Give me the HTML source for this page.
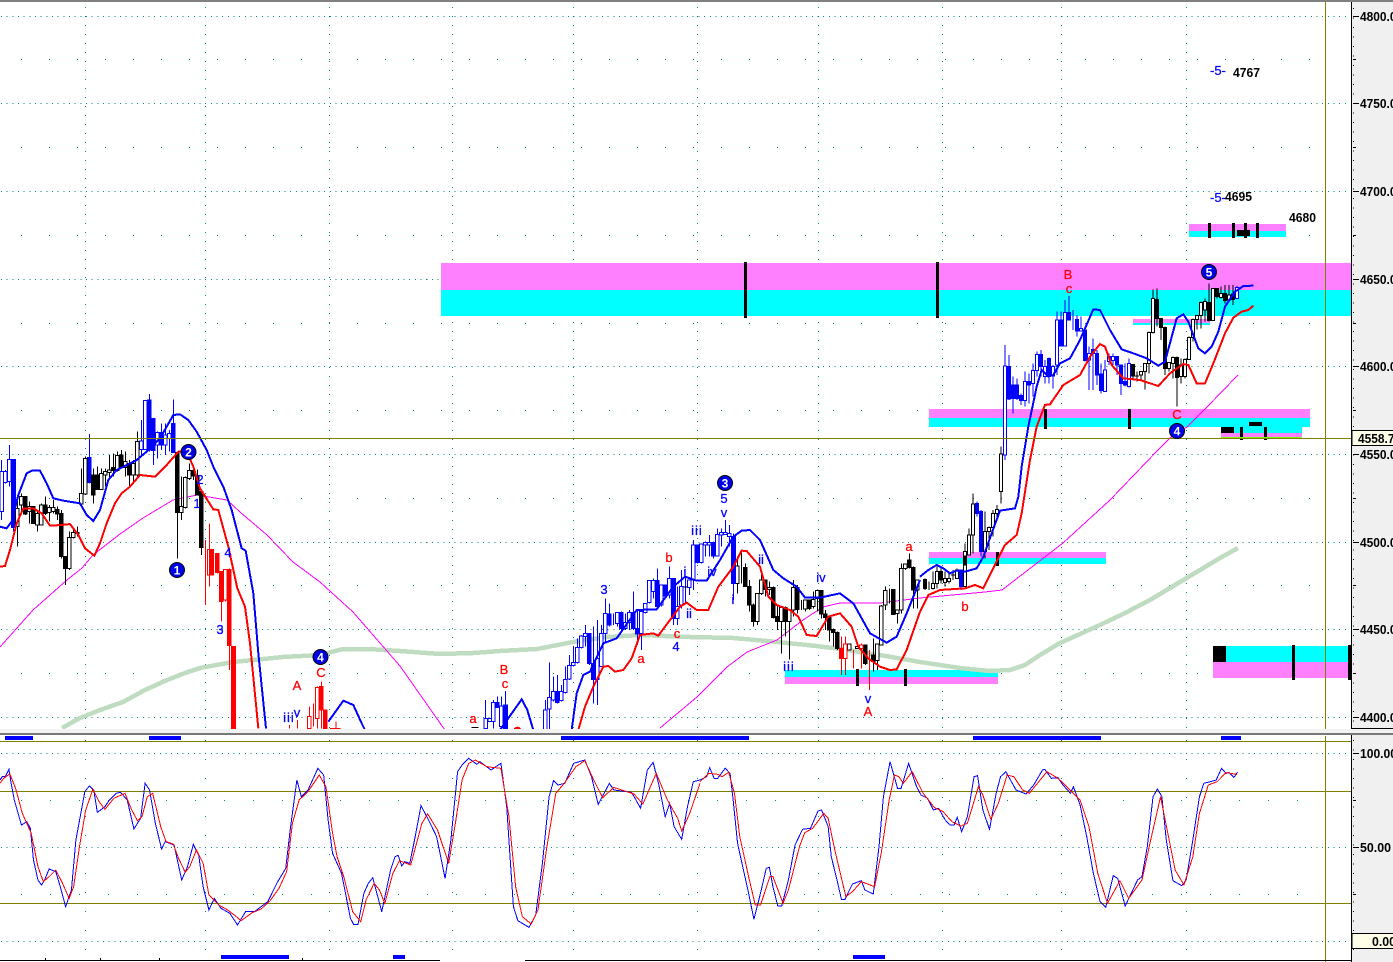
<!DOCTYPE html>
<html><head><meta charset="utf-8"><title>Chart</title>
<style>
html,body{margin:0;padding:0;background:#fff;width:1393px;height:962px;overflow:hidden}
svg{display:block;shape-rendering:crispEdges}
text{font-family:"Liberation Sans",sans-serif;shape-rendering:auto}
.l{font-size:13px;text-anchor:middle}
.b{fill:#0000ff;stroke:#0000ff;stroke-width:.25}.r{fill:#ff0000;stroke:#ff0000;stroke-width:.25}
.i3{letter-spacing:1px}
.k{font-size:13px;font-weight:bold;fill:#000}
.ax{font-size:13px;font-weight:bold;fill:#000}
.c{font-size:12px;font-weight:bold;fill:#fff;text-anchor:middle}
.cc{fill:#0000e6;stroke:#000;stroke-width:1;shape-rendering:auto}
</style></head><body>
<svg width="1393" height="962" viewBox="0 0 1393 962" xmlns="http://www.w3.org/2000/svg">
<rect width="1393" height="962" fill="#fff"/>
<!-- grid -->
<g fill="none" stroke="#008080" stroke-width="1">
<path stroke-dasharray="1 4.67" d="M1 16.5H1346M1 103.5H1346M1 191.5H1346M1 279.5H1346M1 366.5H1346M1 454.5H1346M1 542.5H1346M1 629.5H1346M1 717.5H1346"/>
<path stroke-dasharray="1 27" d="M21 59.5H1320M21 147.5H1320M21 235.5H1320M21 323.5H1320M21 410.5H1320M21 498.5H1320M21 585.5H1320M21 673.5H1320"/>
<path stroke-dasharray="1 8" d="M85.5 7V728M205.5 7V728M329.5 7V728M452.5 7V728M573.5 7V728M697.5 7V728M818.5 7V728M942.5 7V728M1061.5 7V728M1186.5 7V728"/>
</g>
<!-- bands -->
<rect x="441" y="263" width="910" height="27" fill="#ff80ff"/><rect x="441" y="290" width="910" height="26" fill="#00ffff"/>
<rect x="1189" y="224" width="97" height="7" fill="#ff80ff"/><rect x="1189" y="231" width="97" height="6" fill="#00ffff"/>
<rect x="1133" y="319" width="77" height="4" fill="#ff80ff"/><rect x="1133" y="323" width="77" height="2" fill="#00ffff"/>
<rect x="929" y="409" width="381" height="9" fill="#ff80ff"/><rect x="929" y="418" width="381" height="9" fill="#00ffff"/>
<rect x="1221" y="427" width="81" height="6" fill="#00ffff"/><rect x="1221" y="433" width="81" height="5" fill="#ff80ff"/>
<rect x="929" y="552" width="177" height="6" fill="#ff80ff"/><rect x="929" y="558" width="177" height="6" fill="#00ffff"/>
<rect x="1213" y="646" width="138" height="16" fill="#00ffff"/><rect x="1213" y="662" width="138" height="16" fill="#ff80ff"/>
<rect x="785" y="670" width="213" height="7" fill="#00ffff"/><rect x="785" y="677" width="213" height="7" fill="#ff80ff"/>
<!-- band marks -->
<g fill="#000">
<rect x="744" y="262" width="3" height="56"/><rect x="936" y="262" width="3" height="56"/>
<rect x="1208" y="223" width="3" height="15"/><rect x="1232" y="223" width="3" height="15"/><rect x="1244" y="223" width="3" height="15"/><rect x="1256" y="223" width="3" height="15"/><rect x="1237" y="230" width="13" height="6"/>
<rect x="1044" y="409" width="3" height="20"/><rect x="1128" y="409" width="3" height="20"/>
<rect x="1221" y="427" width="13" height="6"/><rect x="1249" y="422" width="13" height="4"/><rect x="1240" y="427" width="3" height="13"/><rect x="1264" y="427" width="3" height="13"/>
<rect x="964" y="552" width="3" height="14"/><rect x="996" y="552" width="3" height="14"/>
<rect x="1213" y="646" width="13" height="16"/><rect x="1292" y="645" width="3" height="35"/><rect x="1348" y="645" width="3" height="35"/>
<rect x="856" y="669" width="3" height="17"/><rect x="904" y="669" width="3" height="17"/>
</g>
<rect x="1221" y="437" width="81" height="2" fill="#80ff00"/>
<!-- green MA -->
<polyline fill="none" stroke="#bfdcc0" stroke-width="4.5" stroke-linejoin="round" points="62,728 80,718 100,710 123,702 145,690 167,680 185,673 200,668 233,662 283,657 320,655 343,649 367,649 400,651 440,654 473,653 500,651 537,649 573,642 607,637 640,635 690,637 733,638 767,641 807,645 833,648 880,655 920,662 960,668 990,671 1010,670 1025,665 1040,655 1060,643 1100,625 1125,613 1150,600 1175,585 1200,570 1220,558 1238,548"/>
<!-- thin magenta -->
<g fill="none" stroke="#ff00ff" stroke-width="1">
<polyline points="0,647 33,610 67,580 82,568 93,555 120,534 143,518 173,500 197,495 227,500 240,512 267,535 293,562 320,582 353,612 400,666 447,733"/>
<polyline points="660,728 697,697 727,667 747,652 777,640 803,620 823,607 840,603 880,603 920,598 985,592 1002,590 1063,543 1110,500 1158,450 1170,438 1187,427 1207,407 1238,375"/>
</g>
<!-- candles 1 -->
<g transform="translate(0,380) scale(.33333)" stroke-width="3">
<g stroke="#00f" fill="none"><path d="M5 240V420M16 270V310M28 195V320M40 238V455M268 162V310M424 120V230M436 60V210M448 42V215M460 115V255M472 155V235M484 130V210M496 130V225M508 150V215M520 58V218"/></g>
<path stroke="#00f" fill="#fff" d="M0 275h10V395H0zM11 275h10V308h-10zM23 238h10V305h-10zM419 183h10V208h-10zM431 62h10V208h-10zM467 158h10V195h-10zM491 165h10V195h-10zM503 160h10V175h-10z"/>
<path stroke="#00f" fill="#00f" d="M34 238h12V442H34zM263 232h10V308h-10zM443 60h10V210h-10zM455 115h10V212h-10zM479 157h10V195h-10zM515 130h10V218h-10z"/>
<path stroke="#000" fill="none" d="M52 345V500M64 340V400M76 350V405M88 365V430M100 380V430M112 395V455M124 370V435M136 350V405M148 375V425M160 360V400M172 380V420M184 390V535M196 530V615M208 455V570M220 445V475M232 440V470M244 265V375M256 230V345M280 265V370M292 260V330M304 265V330M316 265V320M328 225V295M340 220V290M352 215V275M364 210V265M376 215V290M388 240V320M400 240V305M412 155V295M532 215V535M544 290V420M556 290V385M568 250V300M580 265V300M592 268V345M604 335V525"/>
<path stroke="#000" fill="#fff" d="M47 385h10V440H47zM59 350h10V375H59zM83 380h10V395H83zM107 400h10V435h-10zM119 375h10V435h-10zM143 383h10V398h-10zM155 383h10V395h-10zM203 472h10V565h-10zM215 458h10V472h-10zM227 458h10V460h-10zM239 340h10V372h-10zM251 235h10V342h-10zM299 280h10V328h-10zM311 275h10V285h-10zM323 270h10V278h-10zM347 226h10V272h-10zM371 245h10V262h-10zM395 250h10V285h-10zM407 185h10V285h-10zM539 380h10V398h-10zM551 292h10V382h-10zM563 272h10V295h-10z"/>
<path stroke="#000" fill="#000" d="M71 350h10V402H71zM95 380h10V430H95zM131 375h10V400h-10zM167 388h10V402h-10zM179 400h10V530h-10zM191 530h10V565h-10zM275 285h10V345h-10zM287 285h10V328h-10zM335 262h10V272h-10zM359 225h10V262h-10zM383 250h10V285h-10zM527 218h10V398h-10zM575 272h10V288h-10zM587 287h10V345h-10zM599 335h10V503h-10z"/>
<path stroke="#f00" fill="none" d="M616 480V675M628 430V620M652 520V580M664 575V725M676 568V665M688 565V870M868 1035V1045M892 1020V1045M928 980V1045M940 970V1040M952 920V1045M964 905V1045M976 990V1045M990 1045H1022M1008 1025V1045"/>
<path stroke="#f00" fill="#fff" d="M623 508h10V585h-10zM671 568h10V660h-10zM923 1010h10V1045h-10zM947 922h10V1015h-10z"/>
<path stroke="#f00" fill="#f00" d="M628 508h12V585h-12zM647 520h10V578h-10zM659 575h10V665h-10zM683 568h10V797h-10zM694 800h12V1045h-12zM959 920h10V990h-10zM971 990h10V1045h-10z"/>
<polyline fill="none" stroke="#f00" stroke-width="6" points="0,560 15,558 30,510 50,430 70,385 100,385 125,400 150,437 185,435 210,432 235,465 255,505 283,527 300,490 320,430 345,370 365,340 390,320 420,285 465,290 500,255 535,215 560,215 580,260 600,325 640,388 655,390 685,500 712,625 735,680 750,790 775,1045"/>
<polyline fill="none" stroke="#00f" stroke-width="6" points="0,440 20,445 35,425 55,345 80,280 95,272 120,272 140,310 160,355 190,362 240,370 260,405 280,423 300,390 325,300 350,270 380,255 410,240 440,215 480,175 520,105 540,103 565,120 590,155 620,210 640,260 670,320 695,390 725,505 737,512 760,640 775,820 798,1045"/>
<polyline fill="none" stroke="#00f" stroke-width="6" points="985,1025 1030,962 1060,975 1085,1030 1095,1050"/>
</g>
<!-- candles 2 -->
<g transform="translate(440,470) scale(.33333)" stroke-width="3">
<path stroke="#000" fill="none" d="M95 772H115M892 260V370M904 245V340M916 280V350M928 330V425M940 400V470M952 370V465M964 310V375M976 330V380M988 335V375M1000 350V445M1012 410V480M1024 415V550M1036 410V500M1048 420V568M1060 330V440M1072 345V430M1084 390V420M1096 390V425M1108 390V420M1120 365V415M1132 358V425M1144 362V445M1156 420V480M1168 440V515M1180 475V530M1192 485V540M1276 525V585M1300 505V605M1312 520V600M1324 405V525M1336 350V420M1348 355V400M1360 358V435M1372 420V460M1384 280V430M1396 280V300M1408 250V295M1420 290V415M1432 330V415"/>
<path stroke="#000" fill="#fff" d="M887 288h10V340H887zM947 370h10V455H947zM959 330h10V370H959zM983 352h10V358H983zM1019 412h10V455h-10zM1043 420h10V455h-10zM1055 352h10V420h-10zM1091 390h10V417h-10zM1115 388h10V410h-10zM1127 362h10V385h-10zM1223 522h10V540h-10zM1247 530h10V535h-10zM1307 522h10V572h-10zM1319 408h10V525h-10zM1331 362h10V405h-10zM1367 420h10V430h-10zM1379 295h10V420h-10zM1391 282h10V295h-10zM1427 330h10V360h-10z"/>
<path stroke="#000" fill="#000" d="M911 292h10V350H911zM923 350h10V405H923zM935 405h10V455H935zM971 330h10V358H971zM995 352h10V442H995zM1007 440h10V455h-10zM1031 412h10V455h-10zM1067 352h10V418h-10zM1103 390h10V415h-10zM1139 362h10V432h-10zM1151 432h10V442h-10zM1163 442h10V480h-10zM1175 478h10V488h-10zM1187 488h10V535h-10zM1271 525h10V580h-10zM1295 555h10V575h-10zM1355 358h10V433h-10zM1403 270h10V292h-10zM1415 292h10V360h-10z"/>
<path stroke="#f00" fill="none" d="M1204 500V615M1216 500V615M1240 540V595M1264 520V595M1288 540V660"/>
<path stroke="#f00" fill="#fff" d="M1211 522h10V565h-10zM1259 525h10V535h-10z"/>
<path stroke="#f00" fill="#f00" d="M1199 535h10V565h-10z"/>
<path stroke="#00f" fill="none" d="M137 690V775M160 690V775M172 680V712M184 680V770M196 663V780M316 690V780M328 578V780M340 620V695M352 615V700M364 645V695M376 590V670M388 555V630M400 530V590M412 505V580M424 495V535M436 465V530M448 490V585M460 470V700M472 450V705M484 465V590M496 385V515M508 400V470M520 430V465M532 430V470M544 425V480M556 430V480M568 420V480M580 365V480M592 420V525M604 420V540M616 400V430M628 330V400M640 325V385M652 295V415M664 345V410M676 345V385M688 290V385M700 325V465M712 350V465M724 300V415M736 320V400M748 330V375M760 210V360M772 225V280M784 225V280M796 215V260M808 195V260M820 215V265M832 175V260M844 175V230M856 150V195M868 165V230M880 190V390"/>
<path stroke="#00f" fill="#fff" d="M132 745h10V775h-10zM144 745h10V755h-10zM155 698h10V755h-10zM179 708h10V770h-10zM311 720h10V780h-10zM323 682h10V717h-10zM335 665h10V690h-10zM359 665h10V692h-10zM371 628h10V668h-10zM383 587h10V627h-10zM395 578h10V587h-10zM407 532h10V578h-10zM419 498h10V532h-10zM431 490h10V500h-10zM467 565h10V628h-10zM479 490h10V590h-10zM491 430h10V490h-10zM527 428h10V460h-10zM551 458h10V475h-10zM563 428h10V458h-10zM599 425h10V490h-10zM611 400h10V428h-10zM623 332h10V398h-10zM635 332h10V365h-10zM659 345h10V405h-10zM683 325h10V375h-10zM707 410h10V445h-10zM719 350h10V405h-10zM743 330h10V352h-10zM755 225h10V330h-10zM779 222h10V278h-10zM791 218h10V225h-10zM803 218h10V225h-10zM827 193h10V258h-10zM839 188h10V195h-10zM851 188h10V193h-10zM863 190h10V200h-10z"/>
<path stroke="#00f" fill="#00f" d="M167 698h10V712h-10zM190 705h12V780h-12zM347 665h10V697h-10zM443 490h10V580h-10zM455 580h10V628h-10zM503 432h10V465h-10zM539 427h10V475h-10zM575 428h10V475h-10zM587 475h10V492h-10zM647 332h10V410h-10zM671 345h10V378h-10zM694 325h12V445h-12zM767 225h10V278h-10zM815 218h10V258h-10zM874 200h12V340h-12z"/>
<rect x="730" y="349" width="12" height="3" fill="#000"/>
<polyline fill="none" stroke="#f00" stroke-width="6" points="415,780 435,710 460,650 490,590 505,588 525,605 550,600 575,565 600,495 640,490 655,497 690,450 720,410 740,398 770,420 805,420 835,350 880,290 905,242 920,243 960,290 985,380 1010,405 1050,420 1075,440 1100,495 1130,498 1165,440 1200,430 1235,470 1255,530 1285,565 1320,590 1350,600 1370,598 1400,540 1440,425"/>
<polyline fill="none" stroke="#00f" stroke-width="6" points="180,780 245,688 262,720 280,780"/>
<polyline fill="none" stroke="#00f" stroke-width="6" points="395,780 410,670 430,615 450,605 490,520 530,505 590,420 650,418 700,350 735,320 770,332 800,332 840,270 880,200 905,182 930,180 960,210 1000,300 1030,325 1070,350 1095,383 1140,383 1200,370 1240,400 1290,490 1340,518 1370,500 1400,430 1440,330"/>
<circle cx="232" cy="782" r="12" fill="#f00"/>
</g>
<!-- candles 3 -->
<g transform="translate(920,250) scale(.33333)" stroke-width="3">
<path stroke="#000" fill="none" d="M15 985V1020M27 995V1020M39 965V1018M51 950V1015M63 950V1000M75 965V1010M87 965V1000M99 960V990M93 975H105M111 955V985M135 880V1010M147 835V915M159 730V910M195 785V925M207 830V900M219 780V860M231 765V800M243 590V760M639 345V390M651 365V395M645 378H657M663 365V395M675 340V418M687 245V370M699 118V250M711 115V230M723 205V270M735 230V375M747 340V365M759 320V385M771 320V470M783 325V400M795 325V385M807 260V330M819 205V275M831 195V238M843 155V235M855 145V215M867 100V215M879 115V212M891 115V145M903 110V145M915 105V160M927 105V155M939 105V165M951 108V145"/>
<path stroke="#000" fill="#fff" d="M34 1000h10V1015H34zM46 965h10V1000H46zM70 985h10V998H70zM82 985h10V995H82zM106 960h10V985h-10zM130 905h10V1010h-10zM142 855h10V915h-10zM154 762h10V855h-10zM190 845h10V905h-10zM202 833h10V845h-10zM214 790h10V833h-10zM226 778h10V790h-10zM238 612h10V725h-10zM658 365h10V375h-10zM670 340h10V365h-10zM682 248h10V340h-10zM694 145h10V248h-10zM742 338h10V355h-10zM754 322h10V340h-10zM778 345h10V380h-10zM790 328h10V380h-10zM802 262h10V328h-10zM814 208h10V262h-10zM826 197h10V208h-10zM838 157h10V197h-10zM850 155h10V180h-10zM874 115h10V212h-10zM898 130h10V142h-10zM922 135h10V150h-10z"/>
<path stroke="#000" fill="#000" d="M10 988h10V1015H10zM58 965h10V990H58zM130 918h10V945h-10zM634 343h10V378h-10zM706 148h10V205h-10zM718 205h10V232h-10zM730 232h10V355h-10zM766 322h10V382h-10zM862 157h10V212h-10zM886 115h10V140h-10zM910 130h10V152h-10zM934 132h10V148h-10z"/>
<path stroke="#00f" fill="none" d="M171 755V800M183 780V920M255 285V630M267 315V450M279 380V490M291 385V450M303 430V465M315 365V470M327 370V460M339 340V440M351 305V380M363 300V380M375 330V400M387 322V400M399 345V415M411 185V375M423 185V290M435 150V290M447 138V205M459 180V240M471 195V260M483 200V245M495 240V335M507 290V420M519 265V420M531 300V405M543 340V430M555 330V425M567 310V345M579 310V345M591 320V375M603 345V435M615 340V410M627 325V412M123 960V1020M951 108V145"/>
<path stroke="#00f" fill="#fff" d="M250 348h10V615h-10zM310 395h10V452h-10zM334 362h10V400h-10zM346 313h10V362h-10zM370 350h10V380h-10zM394 350h10V378h-10zM406 210h10V345h-10zM430 187h10V288h-10zM478 235h10V243h-10zM502 310h10V330h-10zM550 360h10V425h-10zM562 320h10V335h-10zM574 320h10V332h-10zM622 340h10V410h-10zM946 113h10V145h-10z"/>
<path stroke="#00f" fill="#00f" d="M118 960h10V1010h-10zM166 760h10V790h-10zM178 785h10V905h-10zM262 350h10V447h-10zM274 405h10V445h-10zM286 405h10V445h-10zM298 437h10V452h-10zM322 395h10V405h-10zM358 313h10V350h-10zM382 325h10V378h-10zM418 210h10V288h-10zM442 187h10V210h-10zM466 208h10V243h-10zM490 240h10V332h-10zM514 298h10V310h-10zM526 310h10V375h-10zM538 372h10V422h-10zM586 320h10V345h-10zM598 345h10V400h-10zM610 395h10V405h-10z"/>
<polyline fill="none" stroke="#f00" stroke-width="6" points="0,1086 25,1035 60,1020 135,1015 165,1005 190,1015 215,965 255,885 290,855 305,790 330,630 350,530 375,465 390,463 430,405 480,375 510,320 540,282 555,290 575,345 610,385 660,390 715,408 750,370 790,342 805,345 830,400 855,400 880,340 915,250 940,203 965,185 985,180 1000,167"/>
<polyline fill="none" stroke="#00f" stroke-width="6" points="0,980 25,960 50,945 70,955 90,970 110,962 135,965 170,955 190,920 215,850 240,782 285,775 295,740 305,650 325,530 350,410 365,360 385,380 400,375 420,340 450,325 480,270 520,178 540,180 570,240 605,298 640,310 680,325 715,347 735,335 770,205 790,193 805,215 835,295 855,310 875,290 895,245 915,170 945,125 970,108 1000,107"/>
</g>
<!-- olive price line -->
<path d="M0 438.5H1352" stroke="#808000" stroke-width="1"/>
<!-- labels -->
<g>
<text class="l b" x="200" y="484">2</text><text class="l b" x="197" y="508">1</text><text class="l b" x="220" y="634">3</text><text class="l b" x="228" y="557">4</text>
<text class="l r" x="297" y="690">A</text><text class="l r" x="321" y="677">C</text>
<text class="l b i3" x="289" y="722">iii</text><text class="l b" x="297" y="717">v</text>
<text class="l b" x="724" y="503">5</text><text class="l b" x="724" y="517">v</text><text class="l b i3" x="697" y="535">iii</text>
<text class="l r" x="669" y="562">b</text><text class="l b" x="604" y="594">3</text><text class="l b" x="685" y="576">i</text><text class="l b" x="712" y="576">iv</text>
<text class="l b" x="761" y="564">ii</text><text class="l b" x="689" y="618">ii</text><text class="l b" x="733" y="604">i</text><text class="l b" x="821" y="582">iv</text>
<text class="l r" x="677" y="638">c</text><text class="l b" x="676" y="651">4</text><text class="l r" x="641" y="663">a</text>
<text class="l r" x="504" y="674">B</text><text class="l r" x="505" y="688">c</text><text class="l r" x="473" y="723">a</text>
<text class="l b i3" x="789" y="671">iii</text><text class="l b" x="868" y="703">v</text><text class="l r" x="868" y="716">A</text>
<text class="l r" x="909" y="551">a</text><text class="l r" x="965" y="611">b</text>
<text class="l r" x="1068" y="279">B</text><text class="l r" x="1069" y="293">c</text><text class="l r" x="1177" y="419">C</text>
</g>
<text class="b" x="1210" y="75" font-size="13">-5-</text><text class="b" x="1210" y="202" font-size="13">-5-</text>
<text class="k" x="1233" y="77" textLength="27" lengthAdjust="spacingAndGlyphs">4767</text><text class="k" x="1225" y="201" textLength="27" lengthAdjust="spacingAndGlyphs">4695</text><text class="k" x="1289" y="222" textLength="27" lengthAdjust="spacingAndGlyphs">4680</text>
<!-- wave circles -->
<circle class="cc" cx="177" cy="570" r="7.5"/><text class="c" x="177" y="574.5">1</text>
<circle class="cc" cx="188.500" cy="452" r="7.5"/><text class="c" x="188.500" y="456.500">2</text>
<circle class="cc" cx="725" cy="483" r="7.5"/><text class="c" x="725" y="487.500">3</text>
<circle class="cc" cx="320.500" cy="657" r="7.5"/><text class="c" x="320.500" y="661.500">4</text>
<circle class="cc" cx="1177" cy="431" r="7.5"/><text class="c" x="1177" y="435.500">4</text>
<circle class="cc" cx="1209" cy="272" r="7.5"/><text class="c" x="1209" y="276.500">5</text>
<!-- top edge & vertical -->
<rect x="0" y="0" width="1393" height="2" fill="#808080"/>
<rect x="1325" y="2" width="1" height="960" fill="#808000"/>
<!-- lower pane -->
<rect x="0" y="729" width="1352" height="233" fill="#fff"/>
<rect x="1325" y="736" width="1" height="226" fill="#808000"/>
<rect x="0" y="729" width="1393" height="5" fill="#f2f2f2"/>
<rect x="0" y="733" width="1393" height="2" fill="#787878"/>
<g fill="none" stroke="#008080">
<path stroke-dasharray="1 4.67" d="M1 753.500H1346M1 847.500H1346M1 941.500H1346"/>
<path stroke-dasharray="1 28" d="M21 800.500H1320M21 894.500H1320"/>
<path stroke-dasharray="1 18" d="M85.500 740V958M205.500 740V958M329.500 740V958M452.500 740V958M573.500 740V958M697.500 740V958M818.500 740V958M942.500 740V958M1061.500 740V958M1186.500 740V958"/>
</g>
<path d="M0 741.500H1352M0 791.500H1352M0 903.500H1352" stroke="#808000" stroke-width="1"/>
<g transform="translate(0,730) scale(.44643,.33333)" fill="none">
<polyline stroke="#00f" stroke-width="1" vector-effect="non-scaling-stroke" points="0,150 5,140 12,140 20,118 25,160 32,210 48,285 60,275 68,295 75,390 85,450 93,465 100,450 110,417 125,425 135,470 147,530 160,480 170,330 190,185 200,168 210,180 218,247 235,230 245,210 260,190 270,187 285,210 300,297 315,265 325,160 335,180 348,280 362,357 370,335 390,345 407,450 420,410 433,343 445,375 455,470 468,540 480,505 495,535 515,550 532,585 550,545 570,545 600,515 620,460 640,415 650,300 665,150 675,200 690,180 712,115 725,135 735,270 745,370 765,430 785,565 792,583 802,583 815,490 825,460 835,443 855,545 875,420 885,380 892,376 900,408 907,395 918,400 930,320 943,227 960,270 978,320 997,445 1010,330 1025,125 1035,105 1050,85 1068,103 1075,95 1100,120 1122,100 1135,230 1150,530 1160,572 1185,592 1200,555 1215,400 1230,200 1240,152 1250,165 1265,160 1285,100 1310,90 1325,140 1340,223 1365,160 1375,180 1415,187 1435,235 1450,120 1463,97 1475,160 1490,260 1500,220 1510,290 1527,328 1540,230 1553,155 1568,150"/>
<polyline stroke="#f00" stroke-width="1" vector-effect="non-scaling-stroke" points="0,160 8,145 22,132 35,175 50,250 70,310 85,410 97,455 110,440 125,420 140,460 155,505 165,470 178,350 192,240 208,178 222,215 235,238 255,205 280,190 295,240 308,272 318,260 330,200 342,190 360,290 372,335 388,342 400,385 415,427 425,410 440,360 455,400 468,495 490,525 510,540 525,555 540,572 565,548 585,537 605,512 625,475 642,425 655,280 670,210 690,185 715,135 730,170 745,310 755,380 770,440 790,545 808,575 820,510 838,460 850,480 862,520 880,430 895,392 920,405 945,280 958,252 980,300 1005,400 1020,280 1035,150 1050,100 1065,90 1090,110 1122,115 1140,260 1155,470 1170,560 1190,582 1205,540 1225,350 1245,190 1265,158 1290,110 1310,92 1330,150 1350,203 1375,172 1420,192 1440,222 1470,130 1495,210 1518,265 1527,303 1545,250 1568,160"/>
</g>
<g transform="translate(700,730) scale(.44198,.33333)" fill="none">
<polyline stroke="#00f" stroke-width="1" vector-effect="non-scaling-stroke" points="0,150 15,140 22,113 32,145 40,145 57,115 68,130 75,210 85,340 100,430 110,490 122,568 135,500 150,415 157,412 165,470 176,528 185,528 200,450 215,345 232,298 250,295 267,243 275,240 290,290 297,380 310,450 320,508 328,508 345,462 365,452 373,480 392,492 405,350 415,200 430,95 447,175 455,175 472,100 490,170 500,195 515,205 528,240 540,235 555,270 565,285 575,285 582,262 592,305 605,260 620,140 628,137 640,240 655,298 670,190 680,140 692,125 715,180 738,192 755,165 775,120 780,118 795,145 810,143 820,163 838,190 845,170 860,225 875,320 890,430 905,515 918,532 935,437 945,445 962,528 990,450 1000,440 1012,350 1025,200 1035,177 1045,200 1055,330 1070,452 1090,467 1100,450 1115,330 1130,200 1140,160 1155,155 1168,150 1180,115 1190,130 1197,127 1208,142 1216,127"/>
<polyline stroke="#f00" stroke-width="1" vector-effect="non-scaling-stroke" points="0,155 20,130 40,133 50,140 65,127 78,190 90,320 110,440 125,525 137,525 158,440 165,440 188,520 200,480 225,350 237,308 255,295 280,250 290,265 305,360 330,500 345,485 365,455 395,470 410,370 428,210 440,135 450,140 460,160 480,125 505,190 530,232 550,245 570,275 590,288 605,280 630,170 640,195 658,268 675,220 695,135 710,140 730,180 745,190 785,125 810,145 830,170 860,210 880,290 900,430 922,520 950,452 970,505 1000,450 1018,340 1042,200 1060,320 1075,420 1095,465 1115,380 1130,250 1150,165 1170,155 1190,128 1215,133"/>
</g>
<g fill="#00f">
<rect x="5" y="736" width="28" height="4"/><rect x="149" y="736" width="32" height="4"/><rect x="561" y="736" width="188" height="4"/><rect x="973" y="736" width="128" height="4"/><rect x="1221" y="736" width="20" height="4"/>
<rect x="221" y="955" width="68" height="4"/><rect x="393" y="955" width="12" height="4"/><rect x="853" y="955" width="32" height="4"/>
</g>
<path d="M0 960.500H440M525 960.500H1351M45.500 958V961M100.500 958V961M159.500 958V961M302.500 958V961" stroke="#000" fill="none"/>
<!-- right axis -->
<rect x="1352" y="0" width="41" height="962" fill="#f0f0f0"/>
<rect x="1352" y="0" width="41" height="2" fill="#808080"/>
<rect x="1352" y="729" width="41" height="6" fill="#f2f2f2"/>
<rect x="1352" y="733" width="41" height="2" fill="#787878"/>
<path d="M1351.500 2V729M1351.500 735V962M1352 728.500H1393" stroke="#000" fill="none" stroke-width="1.200"/>
<path d="M1353.500 8V728M1353.500 740V958" stroke="#000" stroke-dasharray="1 8.500" fill="none"/>
<path d="M1353 16.500H1359M1353 103.500H1359M1353 191.500H1359M1353 279.500H1359M1353 366.500H1359M1353 454.500H1359M1353 542.500H1359M1353 629.500H1359M1353 717.500H1359M1353 753.500H1359M1353 847.500H1359M1353 59.500H1356M1353 147.500H1356M1353 235.500H1356M1353 323.500H1356M1353 410.500H1356M1353 498.500H1356M1353 585.500H1356M1353 673.500H1356M1353 800.500H1356M1353 894.500H1356" stroke="#000" fill="none"/>
<text class="ax" x="1360" y="21" textLength="36.500" lengthAdjust="spacingAndGlyphs">4800.0</text><text class="ax" x="1360" y="108" textLength="36.500" lengthAdjust="spacingAndGlyphs">4750.0</text><text class="ax" x="1360" y="196" textLength="36.500" lengthAdjust="spacingAndGlyphs">4700.0</text><text class="ax" x="1360" y="284" textLength="36.500" lengthAdjust="spacingAndGlyphs">4650.0</text><text class="ax" x="1360" y="371" textLength="36.500" lengthAdjust="spacingAndGlyphs">4600.0</text><text class="ax" x="1360" y="459" textLength="36.500" lengthAdjust="spacingAndGlyphs">4550.0</text><text class="ax" x="1360" y="547" textLength="36.500" lengthAdjust="spacingAndGlyphs">4500.0</text><text class="ax" x="1360" y="634" textLength="36.500" lengthAdjust="spacingAndGlyphs">4450.0</text><text class="ax" x="1360" y="722" textLength="36.500" lengthAdjust="spacingAndGlyphs">4400.0</text>
<rect x="1352" y="430.500" width="42" height="15" fill="#ffffe8" stroke="#000"/><text class="ax" x="1358" y="443" textLength="36.500" lengthAdjust="spacingAndGlyphs">4558.7</text>
<text class="ax" x="1360" y="758" textLength="37" lengthAdjust="spacingAndGlyphs">100.00</text><text class="ax" x="1360" y="852" textLength="31" lengthAdjust="spacingAndGlyphs">50.00</text>
<rect x="1352" y="933.500" width="42" height="15" fill="#ffffe8" stroke="#000"/><text class="ax" x="1372" y="946" textLength="24" lengthAdjust="spacingAndGlyphs">0.00</text>
</svg>
</body></html>
